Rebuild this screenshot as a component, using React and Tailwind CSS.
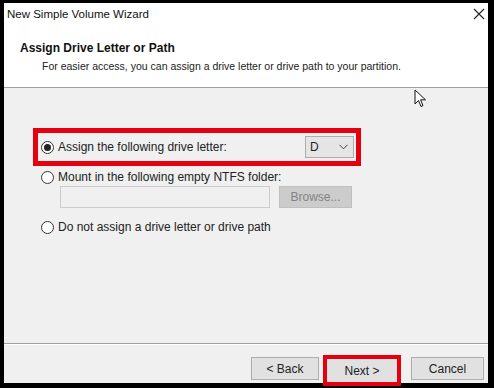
import React from "react";

const Radio = ({ checked }) => (
  <span className="w-[13px] h-[13px] rounded-full border border-[#333] bg-white flex items-center justify-center shrink-0">
    {checked && <span className="w-[7px] h-[7px] rounded-full bg-[#222]" />}
  </span>
);

const Button = ({ children, className = "" }) => (
  <div
    className={`w-[68px] h-[23px] border border-[#adadad] bg-[#e1e1e1] flex items-center justify-center text-[12px] text-[#222] ${className}`}
  >
    {children}
  </div>
);

const App = () => {
  return (
    <div
      className="w-[494px] h-[388px] bg-black pl-[4px] pt-[3px] pr-[6px] pb-[5px]"
      style={{ fontFamily: '"Liberation Sans", Arial, sans-serif' }}
    >
      <div className="w-full h-full flex flex-col bg-white">
        {/* title bar + header */}
        <div className="h-[85px] bg-white border-b border-[#a0a0a0] flex flex-col">
          <div className="h-[23px] flex items-center justify-between pl-[3px] pr-[3px]">
            <span className="text-[11.5px] text-[#111]">New Simple Volume Wizard</span>
            <svg width="12" height="12" viewBox="0 0 12 12" className="mt-[-1px]">
              <path d="M1 1 L11 11 M11 1 L1 11" stroke="#222" strokeWidth="1.1" />
            </svg>
          </div>
          <div className="pl-[16px] pt-[13px] text-[12px] font-bold text-[#111]">
            Assign Drive Letter or Path
          </div>
          <div className="pl-[38px] pt-[2px] text-[10.5px] text-[#222]">
            For easier access, you can assign a drive letter or drive path to your partition.
          </div>
        </div>

        {/* body */}
        <div className="flex-1 bg-[#f0f0f0] relative pt-[40px] pl-[29px] border-b border-[#a0a0a0]">
          {/* mouse cursor */}
          <svg
            width="14"
            height="20"
            viewBox="0 0 14 20"
            className="absolute left-[410px] top-[1px]"
          >
            <path
              d="M1 1 L1 15 L4.5 11.5 L7 17.5 L9 16.6 L6.6 10.8 L11.5 10.8 Z"
              fill="white"
              stroke="#111"
              strokeWidth="1"
              strokeLinejoin="round"
            />
          </svg>

          <div className="w-[328px] h-[38px] border-[5px] border-[#e4000f] flex items-center pl-[3px] pr-[2px]">
            <Radio checked />
            <span className="ml-[4px] text-[12px] text-[#222]">Assign the following drive letter:</span>
            <div className="ml-auto w-[49px] h-[22px] border border-[#adadad] bg-[#e5e5e5] flex items-center justify-between pl-[4px] pr-[5px]">
              <span className="text-[12px] text-[#222]">D</span>
              <svg width="9" height="6" viewBox="0 0 9 6">
                <path d="M0.5 0.8 L4.5 4.8 L8.5 0.8" fill="none" stroke="#444" strokeWidth="1" />
              </svg>
            </div>
          </div>

          <div className="flex items-center h-[20px] pl-[8px] mt-[1px]">
            <Radio />
            <span className="ml-[4px] text-[12px] text-[#222]">Mount in the following empty NTFS folder:</span>
          </div>

          <div className="flex items-center pl-[27px] mt-[-1px]">
            <div className="w-[210px] h-[22px] border border-[#cccccc] bg-[#f0f0f0]" />
            <div className="ml-[9px] w-[73px] h-[22px] border border-[#bfbfbf] bg-[#cccccc] flex items-center justify-center text-[12px] text-[#838383]">
              Browse...
            </div>
          </div>

          <div className="flex items-center h-[20px] pl-[8px] mt-[9px]">
            <Radio />
            <span className="ml-[4px] text-[12px] text-[#222]">Do not assign a drive letter or drive path</span>
          </div>
        </div>

        {/* footer */}
        <div className="h-[39px] bg-[#f0f0f0] border-t border-white flex items-start justify-end pt-[12px] pr-[4px]">
          <Button>&lt; Back</Button>
          <div className="ml-[4px] mt-[-2px] border-[4px] border-[#e4000f]">
            <Button className="w-[70px] h-[19px] border-0">Next &gt;</Button>
          </div>
          <Button className="ml-[10px] w-[73px]">Cancel</Button>
        </div>
      </div>
    </div>
  );
};

export default App;
